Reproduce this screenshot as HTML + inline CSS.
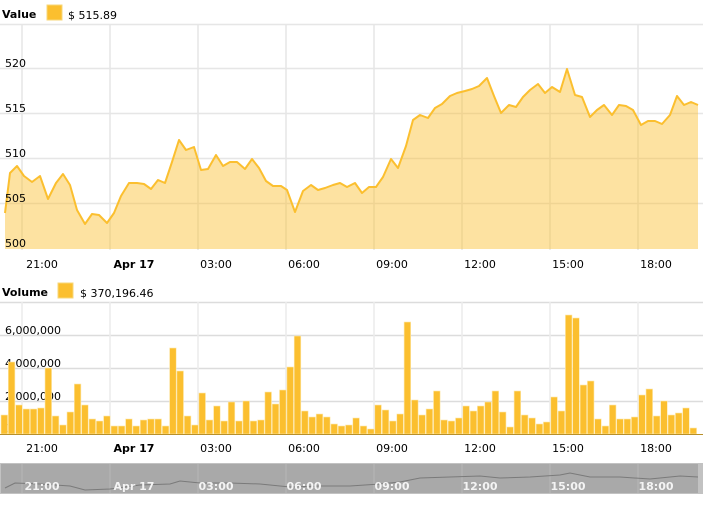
<!DOCTYPE html>
<html><head><style>
body{margin:0;background:#fff;width:703px;height:500px;overflow:hidden;font-family:"Liberation Sans","DejaVu Sans",sans-serif}
svg text{font-family:"DejaVu Sans","Liberation Sans",sans-serif;font-size:11px;fill:#000}
</style></head><body>
<svg width="703" height="500" viewBox="0 0 703 500" xmlns="http://www.w3.org/2000/svg">
<text x="2" y="18" style="font-weight:bold">Value</text>
<rect x="47" y="5" width="15" height="15" fill="#fbbf2f" stroke="#f7d77a"/>
<text x="68" y="19">$ 515.89</text>
<g stroke="#e6e6e6" stroke-width="1.5">
<line x1="0" y1="24.5" x2="703" y2="24.5"/>
<line x1="0" y1="68.5" x2="703" y2="68.5"/>
<line x1="0" y1="113.5" x2="703" y2="113.5"/>
<line x1="0" y1="158.5" x2="703" y2="158.5"/>
<line x1="0" y1="203.5" x2="703" y2="203.5"/>
<line x1="22" y1="24" x2="22" y2="250"/><line x1="110" y1="24" x2="110" y2="250"/><line x1="198" y1="24" x2="198" y2="250"/><line x1="286" y1="24" x2="286" y2="250"/><line x1="374" y1="24" x2="374" y2="250"/><line x1="462" y1="24" x2="462" y2="250"/><line x1="550" y1="24" x2="550" y2="250"/><line x1="638" y1="24" x2="638" y2="250"/>
</g>
<path d="M5,213 L10,173 L17,166 L24,176 L32,182 L40,176 L48,199 L56,183 L63,174 L70,185 L77,210 L85,224 L92,214 L99,215 L107,223 L114,213 L121,196 L129,183 L137,183 L144,184 L151,189 L158,180 L165,183 L172,162 L179,140 L186,150 L194,147 L201,170 L208,169 L216,155 L223,166 L230,162 L237,162 L245,169 L252,159 L259,168 L266,181 L273,186 L281,186 L287,190 L295,212 L303,191 L311,185 L318,190 L325,188 L333,185 L340,183 L347,187 L355,183 L362,193 L369,187 L376,187 L383,177 L391,159 L398,168 L406,146 L413,120 L420,115 L428,118 L435,108 L442,104 L450,96 L457,93 L465,91 L472,89 L479,86 L487,78 L494,96 L501,113 L509,105 L516,107 L523,97 L530,90 L538,84 L545,93 L552,87 L560,92 L567,69 L575,95 L582,97 L590,117 L597,110 L604,105 L612,115 L619,105 L626,106 L633,110 L641,125 L648,121 L655,121 L662,124 L670,115 L677,96 L684,105 L691,102 L698,105 L698,249 L5,249 Z" fill="#fbbf2f" fill-opacity="0.45"/>
<path d="M5,213 L10,173 L17,166 L24,176 L32,182 L40,176 L48,199 L56,183 L63,174 L70,185 L77,210 L85,224 L92,214 L99,215 L107,223 L114,213 L121,196 L129,183 L137,183 L144,184 L151,189 L158,180 L165,183 L172,162 L179,140 L186,150 L194,147 L201,170 L208,169 L216,155 L223,166 L230,162 L237,162 L245,169 L252,159 L259,168 L266,181 L273,186 L281,186 L287,190 L295,212 L303,191 L311,185 L318,190 L325,188 L333,185 L340,183 L347,187 L355,183 L362,193 L369,187 L376,187 L383,177 L391,159 L398,168 L406,146 L413,120 L420,115 L428,118 L435,108 L442,104 L450,96 L457,93 L465,91 L472,89 L479,86 L487,78 L494,96 L501,113 L509,105 L516,107 L523,97 L530,90 L538,84 L545,93 L552,87 L560,92 L567,69 L575,95 L582,97 L590,117 L597,110 L604,105 L612,115 L619,105 L626,106 L633,110 L641,125 L648,121 L655,121 L662,124 L670,115 L677,96 L684,105 L691,102 L698,105" fill="none" stroke="#fbbf2f" stroke-width="2" stroke-linejoin="round"/>
<text x="5" y="67">520</text><text x="5" y="112">515</text><text x="5" y="157">510</text><text x="5" y="202">505</text><text x="5" y="247">500</text>
<g text-anchor="middle">
<text x="42" y="268">21:00</text><text x="134" y="268" style="font-weight:bold">Apr 17</text><text x="216" y="268">03:00</text><text x="304" y="268">06:00</text><text x="392" y="268">09:00</text><text x="480" y="268">12:00</text><text x="568" y="268">15:00</text><text x="656" y="268">18:00</text>
</g>
<text x="2" y="296" style="font-weight:bold">Volume</text>
<rect x="58" y="283" width="15" height="15" fill="#fbbf2f" stroke="#f7d77a"/>
<text x="80" y="297">$ 370,196.46</text>
<g stroke="#dcdcdc" stroke-width="1.5">
<line x1="0" y1="302.5" x2="703" y2="302.5"/><line x1="0" y1="335.5" x2="703" y2="335.5"/><line x1="0" y1="368.5" x2="703" y2="368.5"/><line x1="0" y1="401.5" x2="703" y2="401.5"/>
</g>
<g stroke="#ececec" stroke-width="1.5">
<line x1="22" y1="302" x2="22" y2="434"/><line x1="110" y1="302" x2="110" y2="434"/><line x1="198" y1="302" x2="198" y2="434"/><line x1="286" y1="302" x2="286" y2="434"/><line x1="374" y1="302" x2="374" y2="434"/><line x1="462" y1="302" x2="462" y2="434"/><line x1="550" y1="302" x2="550" y2="434"/><line x1="638" y1="302" x2="638" y2="434"/>
</g>
<text x="5" y="334">6,000,000</text><text x="5" y="367">4,000,000</text><text x="5" y="400">2,000,000</text>
<text x="5" y="432">0</text>
<g fill="#fbbf2f" stroke="#fde9b0" stroke-width="0.6" id="bars"></g>
<line x1="0" y1="434.5" x2="703" y2="434.5" stroke="#b8902a" stroke-width="1"/>
<g text-anchor="middle">
<text x="42" y="452">21:00</text><text x="134" y="452" style="font-weight:bold">Apr 17</text><text x="216" y="452">03:00</text><text x="304" y="452">06:00</text><text x="392" y="452">09:00</text><text x="480" y="452">12:00</text><text x="568" y="452">15:00</text><text x="656" y="452">18:00</text>
</g>
<rect x="0" y="463" width="703" height="31" fill="#c2c2c2"/>
<rect x="1" y="464" width="697" height="29" fill="#a9a9a9"/>
<g stroke="#b8b8b8" stroke-width="1"><line x1="22" y1="464" x2="22" y2="493"/><line x1="110" y1="464" x2="110" y2="493"/><line x1="198" y1="464" x2="198" y2="493"/><line x1="286" y1="464" x2="286" y2="493"/><line x1="374" y1="464" x2="374" y2="493"/><line x1="462" y1="464" x2="462" y2="493"/><line x1="550" y1="464" x2="550" y2="493"/><line x1="638" y1="464" x2="638" y2="493"/></g>
<path d="M5,488 L15,483 L40,484 L70,486 L85,490 L110,489 L140,485 L170,484 L180,481 L200,483 L230,483 L260,484 L290,487 L320,486 L350,486 L380,484 L400,482 L420,478 L450,477 L480,476 L500,478 L530,477 L560,475 L570,473 L590,477 L620,477 L650,479 L680,476 L698,477" fill="none" stroke="#7a7a7a" stroke-width="1"/>
<g text-anchor="middle">
<text x="42" y="490" style="fill:#f4f4f4;font-weight:bold">21:00</text><text x="134" y="490" style="fill:#f4f4f4;font-weight:bold">Apr 17</text><text x="216" y="490" style="fill:#f4f4f4;font-weight:bold">03:00</text><text x="304" y="490" style="fill:#f4f4f4;font-weight:bold">06:00</text><text x="392" y="490" style="fill:#f4f4f4;font-weight:bold">09:00</text><text x="480" y="490" style="fill:#f4f4f4;font-weight:bold">12:00</text><text x="568" y="490" style="fill:#f4f4f4;font-weight:bold">15:00</text><text x="656" y="490" style="fill:#f4f4f4;font-weight:bold">18:00</text>
</g>
</svg>
<script>
var tops=[415,362,405,409,409,408,368,416,425,412,384,405,419,421,416,426,426,419,426,420,419,419,426,348,371,416,425,393,420,406,421,402,421,401,421,420,392,404,390,367,336,411,417,414,417,424,426,425,418,426,429,405,410,421,414,322,400,415,409,391,420,421,418,406,411,406,402,391,412,427,391,415,418,424,422,397,411,315,318,385,381,419,426,405,419,419,417,395,389,416,401,415,413,408,428];
var g=document.getElementById('bars'),s='';
for(var i=0;i<tops.length;i++){var x=1+i*7.33;s+='<rect x="'+x.toFixed(1)+'" y="'+tops[i]+'" width="6.6" height="'+(434-tops[i])+'"/>';}
g.innerHTML=s;
</script>
</body></html>
